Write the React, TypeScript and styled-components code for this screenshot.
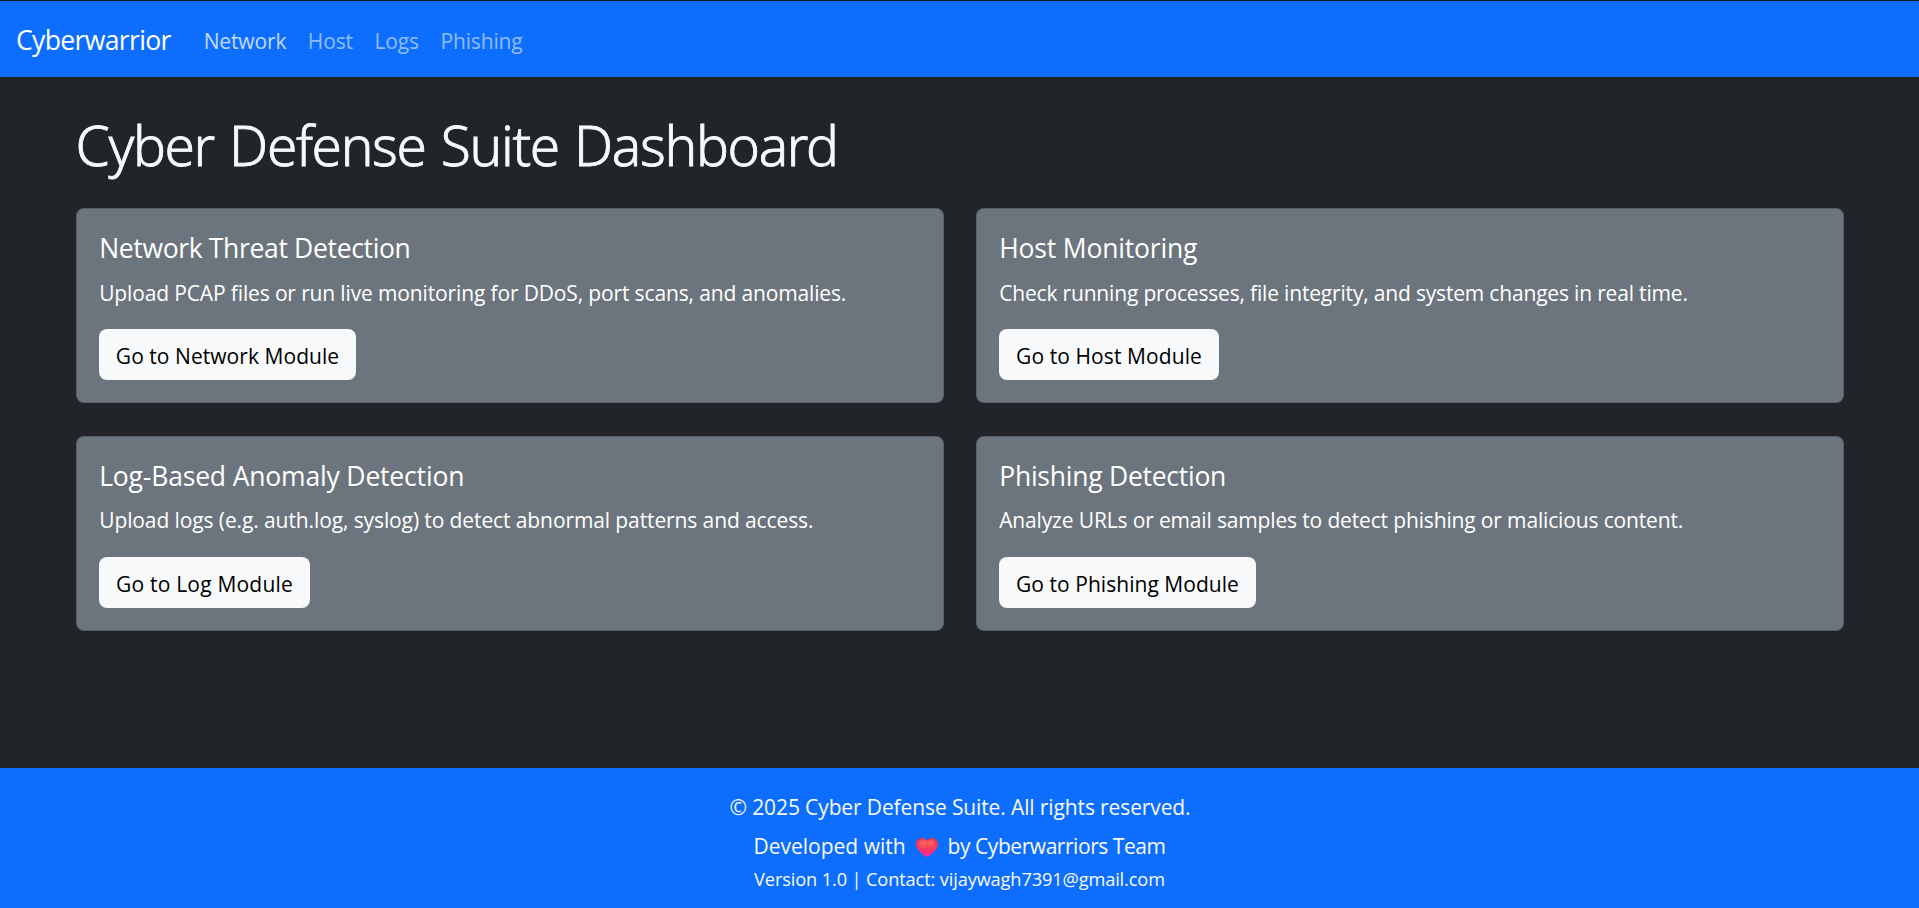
import React from 'react';
import styled, { createGlobalStyle } from 'styled-components';

const GlobalStyle = createGlobalStyle`
  *, *::before, *::after { box-sizing: border-box; }
  body {
    margin: 0;
    background: #212529;
    color: #f8f9fa;
    font-family: "Open Sans", "Noto Sans", sans-serif;
    font-size: 21px;
    line-height: 32px;
  }
  h1, h5, p { margin: 0; font-weight: 400; }
  a { color: inherit; text-decoration: none; }
`;

const Page = styled.div`
  display: flex;
  flex-direction: column;
  min-height: 100vh;
`;

const Navbar = styled.nav`
  display: flex;
  align-items: center;
  height: 77px;
  padding: 1px 16px 0;
  border-top: 1px solid #101a2b;
  background: #0d6efd;
`;

const Brand = styled.a`
  color: #fff;
  font-size: 26.6px;
  letter-spacing: -0.68px;
  white-space: nowrap;
`;

const NavLinks = styled.div`
  display: flex;
  gap: 21.6px;
  padding-top: 2px;
  margin-left: 33px;
  letter-spacing: -0.15px;
`;

const NavLink = styled.a<{ $active?: boolean }>`
  color: ${(p) => (p.$active ? 'rgba(255, 255, 255, 0.75)' : 'rgba(255, 255, 255, 0.55)')};
`;

const Main = styled.main`
  flex: 1;
  width: 1768px;
  margin: 0 auto;
  padding-top: 35.3px;
`;

const PageTitle = styled.h1`
  margin-bottom: 30px;
  font-family: "Noto Sans", sans-serif;
  font-size: 55px;
  font-weight: 300;
  line-height: 66px;
  letter-spacing: -1.32px;
  word-spacing: 2.2px;
  -webkit-text-stroke: 0.8px #f8f9fa;
`;

const CardGrid = styled.div`
  display: grid;
  grid-template-columns: 1fr 1fr;
  gap: 32.8px 32px;
`;

const Card = styled.section`
  height: 195px;
  padding: 23px 22px 22px 22.7px;
  border: 1px solid rgba(0, 0, 0, 0.175);
  border-radius: 8px;
  background: #6c757d;
`;

const CardTitle = styled.h5<{ $spacing: number }>`
  padding-top: 1px;
  margin-bottom: 12.3px;
  color: #fff;
  font-size: 26.5px;
  line-height: 31px;
  letter-spacing: ${(p) => p.$spacing}px;
`;

const CardText = styled.p<{ $spacing: number }>`
  margin-bottom: 20.4px;
  color: #fff;
  letter-spacing: ${(p) => p.$spacing}px;
`;

const Button = styled.a<{ $width: number; $spacing: number }>`
  display: flex;
  align-items: center;
  justify-content: center;
  width: ${(p) => p.$width}px;
  height: 51px;
  padding: 3px 0 0 1px;
  margin-left: -0.7px;
  border-radius: 8px;
  background: #f8f9fa;
  color: #000;
  white-space: nowrap;
  letter-spacing: ${(p) => p.$spacing}px;
`;

const Footer = styled.footer`
  display: flex;
  flex-direction: column;
  align-items: center;
  height: 140px;
  padding-top: 23px;
  background: #0d6efd;
`;

const Copyright = styled.p`
  padding-left: 1px;
  margin-bottom: 7px;
  letter-spacing: -0.12px;
`;

const Credits = styled.p`
  display: flex;
  align-items: center;
  gap: 10px;
  margin-bottom: 4px;
`;

const TeamName = styled.span`
  letter-spacing: -0.45px;
`;

const Version = styled.small`
  font-size: 18.2px;
  line-height: 27px;
  letter-spacing: -0.12px;
`;

const HeartIcon = styled.svg`
  width: 22px;
  height: 19px;
  margin-top: 3px;
`;

function Heart() {
  return (
    <HeartIcon viewBox="0 0 22 19">
      <defs>
        <linearGradient id="heartBase" x1="0" y1="0" x2="0" y2="1">
          <stop offset="0" stopColor="#dc2c4a" />
          <stop offset="0.45" stopColor="#fb3a58" />
          <stop offset="1" stopColor="#fb2a92" />
        </linearGradient>
        <radialGradient id="heartGlow" cx="0.33" cy="0.26" r="0.3">
          <stop offset="0" stopColor="#ff6a62" />
          <stop offset="1" stopColor="#ff6a62" stopOpacity="0" />
        </radialGradient>
        <radialGradient id="heartShine" cx="0.68" cy="0.26" r="0.28">
          <stop offset="0" stopColor="#ff6a62" />
          <stop offset="1" stopColor="#ff6a62" stopOpacity="0" />
        </radialGradient>
      </defs>
      {['heartBase', 'heartGlow', 'heartShine'].map((id) => (
        <path
          key={id}
          fill={`url(#${id})`}
          d="M11 2.500C9.800.9 8 0 6 0 2.600 0 0 2.600 0 6c0 4.400 4.600 8.800 10 12.600.6.500 1.400.5 2 0C17.400 14.800 22 10.400 22 6 22 2.600 19.400 0 16 0 14 0 12.200.9 11 2.500z"
        />
      ))}
    </HeartIcon>
  );
}

const links = ['Network', 'Host', 'Logs', 'Phishing'];

const modules = [
  {
    title: 'Network Threat Detection',
    titleSpacing: -0.34,
    text: 'Upload PCAP files or run live monitoring for DDoS, port scans, and anomalies.',
    textSpacing: -0.14,
    action: 'Go to Network Module',
    actionSpacing: 0.05,
    actionWidth: 257,
  },
  {
    title: 'Host Monitoring',
    titleSpacing: -0.18,
    text: 'Check running processes, file integrity, and system changes in real time.',
    textSpacing: -0.178,
    action: 'Go to Host Module',
    actionSpacing: 0.09,
    actionWidth: 220,
  },
  {
    title: 'Log-Based Anomaly Detection',
    titleSpacing: -0.17,
    text: 'Upload logs (e.g. auth.log, syslog) to detect abnormal patterns and access.',
    textSpacing: -0.104,
    action: 'Go to Log Module',
    actionSpacing: 0.2,
    actionWidth: 211,
  },
  {
    title: 'Phishing Detection',
    titleSpacing: -0.25,
    text: 'Analyze URLs or email samples to detect phishing or malicious content.',
    textSpacing: -0.15,
    action: 'Go to Phishing Module',
    actionSpacing: 0.04,
    actionWidth: 257,
  },
];

export default function App() {
  return (
    <Page>
      <GlobalStyle />
      <Navbar>
        <Brand href="#">Cyberwarrior</Brand>
        <NavLinks>
          {links.map((label, i) => (
            <NavLink key={label} href="#" $active={i === 0}>
              {label}
            </NavLink>
          ))}
        </NavLinks>
      </Navbar>
      <Main>
        <PageTitle>Cyber Defense Suite Dashboard</PageTitle>
        <CardGrid>
          {modules.map((m) => (
            <Card key={m.title}>
              <CardTitle $spacing={m.titleSpacing}>{m.title}</CardTitle>
              <CardText $spacing={m.textSpacing}>{m.text}</CardText>
              <Button href="#" $width={m.actionWidth} $spacing={m.actionSpacing}>
                {m.action}
              </Button>
            </Card>
          ))}
        </CardGrid>
      </Main>
      <Footer>
        <Copyright>© 2025 Cyber Defense Suite. All rights reserved.</Copyright>
        <Credits>
          <span>Developed with</span>
          <Heart />
          <TeamName>by Cyberwarriors Team</TeamName>
        </Credits>
        <Version>Version 1.0 | Contact: vijaywagh7391@gmail.com</Version>
      </Footer>
    </Page>
  );
}
